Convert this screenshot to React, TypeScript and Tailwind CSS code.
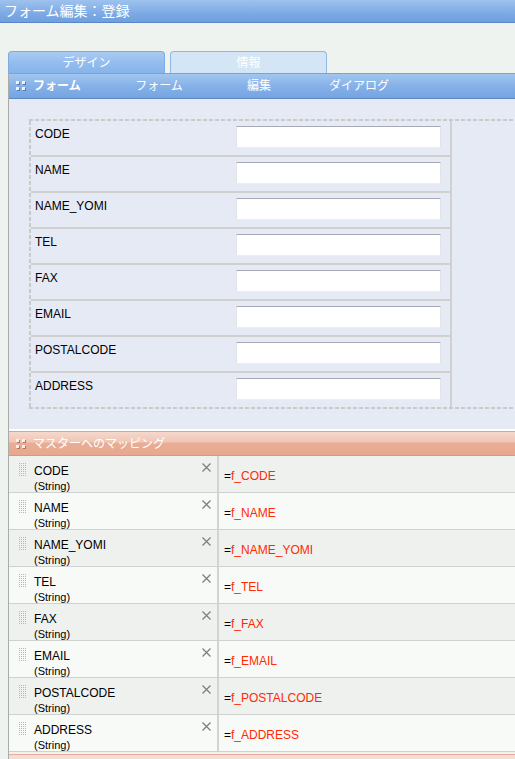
import React from "react";

const fields = ["CODE", "NAME", "NAME_YOMI", "TEL", "FAX", "EMAIL", "POSTALCODE", "ADDRESS"];

function HeaderGrip({ light, shade }: { light: string; shade: string }) {
  return (
    <svg width="10" height="10" viewBox="0 0 10 10" className="shrink-0">
      {[
        [0, 0],
        [6, 0],
        [0, 6],
        [6, 6],
      ].map(([x, y], i) => (
        <g key={i}>
          <rect x={x + 1} y={y + 1} width="3" height="3" fill={shade} />
          <rect x={x} y={y} width="3" height="3" fill={light} />
        </g>
      ))}
    </svg>
  );
}

function RowGrip() {
  const dots: React.ReactNode[] = [];
  for (let r = 0; r < 7; r++) {
    for (let c = 0; c < 4; c++) {
      dots.push(<rect key={`${r}-${c}`} x={c * 2} y={r * 2} width="1" height="1" fill="#eba58c" />);
    }
  }
  return (
    <svg width="7" height="13" viewBox="0 0 7 13" className="shrink-0">
      {dots}
    </svg>
  );
}

function CloseMark() {
  return (
    <svg width="9" height="9" viewBox="0 0 9 9" className="shrink-0">
      <path d="M0.5 0.5 L8.5 8.5 M8.5 0.5 L0.5 8.5" stroke="#7c7c7c" strokeWidth="1.2" />
    </svg>
  );
}

export default function App() {
  return (
    <div className="w-[515px] h-[759px] overflow-hidden bg-[#eef3f0] font-['Liberation_Sans','Noto_Sans_CJK_JP',sans-serif] text-black">
      {/* title bar */}
      <div className="h-[23px] border-b border-[#5a86c4] bg-[linear-gradient(#9dc2ee,#7eaae5_60%,#6e9fdf)] pl-[4px] text-[14px] leading-[22px] text-white">
        フォーム編集：登録
      </div>

      <div className="h-[28px]" />

      {/* tabs */}
      <div className="flex h-[22px] gap-[5px] pl-[8px]">
        <div className="w-[157px] h-[22px] rounded-t-[4px] border border-b-0 border-[#7eabe0] bg-[linear-gradient(#a9cbf1,#94bdef_50%,#86b4ea)] text-center text-[12px] leading-[22px] text-white">
          デザイン
        </div>
        <div className="w-[157px] h-[22px] rounded-t-[4px] border border-b-0 border-[#8fb9e4] bg-[#d4e6f5] text-center text-[12px] leading-[22px] text-white">
          情報
        </div>
      </div>

      {/* panel */}
      <div className="ml-[8px] border-l border-[#a9aca9]">
        <div className="flex h-[26px] items-center border-t border-b border-t-[#9c9c9c] border-b-[#5e86c0] bg-[linear-gradient(#a2c6ef,#86b1e8_50%,#74a4e1)] pl-[7px] text-[12px] leading-[16px] text-white">
          <HeaderGrip light="#eef3fb" shade="#5a78a8" />
          <div className="ml-[7px] w-[76px] font-bold">フォーム</div>
          <div className="w-[100px] text-center">フォーム</div>
          <div className="w-[100px] text-center">編集</div>
          <div className="w-[100px] text-center">ダイアログ</div>
        </div>

        {/* form layout */}
        <div className="bg-[#e6eaf5] pt-[20px] pb-[20px] pl-[20px]">
          <div className="flex w-full flex-col">
            <div className="h-[2px] w-full bg-[repeating-linear-gradient(90deg,#cacaca_0_4px,transparent_4px_6px)]" />
            <div className="flex">
              <div className="w-[2px] bg-[repeating-linear-gradient(180deg,#cacaca_0_4px,transparent_4px_6px)]" />
              <div className="w-[421px] border-r-2 border-[#d0d0d0]">
                {fields.map((f, i) => (
                  <div
                    key={f}
                    className={`flex h-[34px] box-content ${i > 0 ? "border-t-2 border-[#d0d0d0]" : ""}`}
                  >
                    <div className="w-[205px] pl-[4px] pt-[6px] text-[12px] leading-[14px]">{f}</div>
                    <div className="mt-[5px] h-[22px] w-[205px] border border-t-[#a9a9b5] border-x-[#e2e4ea] border-b-[#eceef2] bg-white" />
                  </div>
                ))}
              </div>
            </div>
            <div className="h-[2px] w-full bg-[repeating-linear-gradient(90deg,#cacaca_0_4px,transparent_4px_6px)]" />
          </div>
        </div>

        <div className="h-[2px] bg-white" />

        {/* mapping section */}
        <div className="flex h-[25px] items-center border-t border-b border-t-[#e2a286] border-b-[#d59a82] bg-[linear-gradient(#f5d8cc,#f0c6b6_42%,#e9ac94_50%,#e8a890)] pl-[7px] text-[12px] leading-[16px] text-white">
          <HeaderGrip light="#fbefe9" shade="#b07862" />
          <div className="ml-[7px]">マスターへのマッピング</div>
        </div>

        {fields.map((f, i) => (
          <div
            key={f}
            className={`flex h-[37px] border-b border-[#cfd2cf] ${i % 2 === 0 ? "bg-[#eff1ef]" : "bg-[#f8faf8]"}`}
          >
            <div className="flex w-[210px] border-r-2 border-[#d2d4d2] pl-[10px] pt-[7px]">
              <RowGrip />
              <div className="ml-[8px] flex-1 pt-[1px]">
                <div className="text-[12px] leading-[14px]">{f}</div>
                <div className="text-[11px] leading-[17px]">(String)</div>
              </div>
              <div className="mr-[6px]">
                <CloseMark />
              </div>
            </div>
            <div className="flex flex-1 items-center pl-[5px] pt-[4px] text-[12px] leading-[14px]">
              <span>=</span>
              <span className="text-[#ff2a00]">f_{f}</span>
            </div>
          </div>
        ))}

        <div className="mt-[2px] h-[10px] border-t border-[#e8ad98] bg-[#f6dcd2]" />
      </div>
    </div>
  );
}
